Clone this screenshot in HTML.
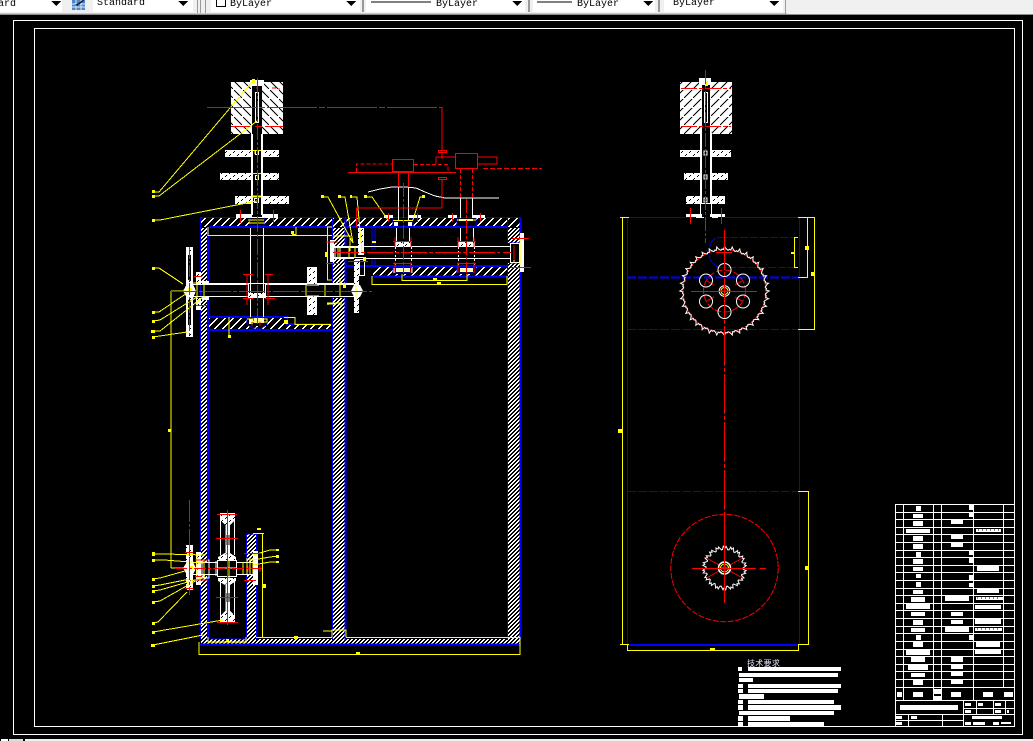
<!DOCTYPE html>
<html><head><meta charset="utf-8"><title>CAD</title>
<style>html,body{margin:0;padding:0;background:#000;width:1033px;height:741px;overflow:hidden}svg{display:block}
.t{font:10px "Liberation Mono","Noto Sans CJK SC",monospace;fill:#000}</style></head>
<body>
<svg width="1033" height="741" viewBox="0 0 1033 741" xmlns="http://www.w3.org/2000/svg" shape-rendering="crispEdges" fill="none">
<defs>
<pattern id="hb" width="9" height="9" patternUnits="userSpaceOnUse"><rect width="9" height="9" fill="#fff"/><path d="M0 0L8 8" stroke="#000"/></pattern>
<pattern id="hf" width="9" height="9" patternUnits="userSpaceOnUse"><rect width="9" height="9" fill="#fff"/><path d="M8 0L0 8" stroke="#000"/></pattern>
<pattern id="dk" width="8" height="6" patternUnits="userSpaceOnUse"><rect width="8" height="6" fill="#fff"/><path d="M2 1h1v1h-1zM1 2h1v1h-1zM6 4h1v1h-1zM5 5h1v1h-1z" fill="#000"/></pattern>
<pattern id="fine" width="4" height="4" patternUnits="userSpaceOnUse"><path d="M2 0h2v1h-2zM1 1h2v1h-2zM0 2h2v1h-2zM0 3h1v1h-1zM3 3h1v1h-1z" fill="#fff"/></pattern>
<pattern id="co" width="8" height="8" patternUnits="userSpaceOnUse"><path d="M6 0h2v1h-2zM5 1h2v1h-2zM4 2h2v1h-2zM3 3h2v1h-2zM2 4h2v1h-2zM1 5h2v1h-2zM0 6h2v1h-2zM0 7h1v1h-1zM7 7h1v1h-1z" fill="#fff"/></pattern>
<path id="ta" d="M-3.500 -40.500L-2.500 -42L-1 -41.500L0 -44.700L1 -43L3.500 -40.500" stroke="#fff"/>
<path id="tb" d="M-3.400 -18L-2 -18.500L-1.200 -21.800L0.500 -20L1.500 -21.800L3.400 -18" stroke="#fff"/>
</defs>

<!-- toolbar -->
<rect x="0" y="0" width="1033" height="15" fill="#f0f0f0"/>
<rect x="0" y="13" width="787" height="1" fill="#c8c8c8"/><rect x="787" y="14" width="246" height="1" fill="#a8a8a8"/>
<rect x="0" y="14" width="1033" height="1" fill="#8c8c8c"/>
<g fill="#fff"><rect x="0" y="0" width="62" height="12"/><rect x="93" y="0" width="100" height="12"/><rect x="211" y="0" width="149" height="12"/><rect x="366" y="0" width="159" height="12"/><rect x="533" y="0" width="122" height="12"/><rect x="664" y="0" width="119" height="12"/></g>
<g fill="#999"><rect x="197" y="0" width="1" height="13"/><rect x="200" y="0" width="1" height="13"/><rect x="205" y="0" width="1" height="13"/><rect x="362" y="0" width="2" height="12"/><rect x="528" y="0" width="2" height="12"/><rect x="658" y="0" width="2" height="12"/><rect x="785" y="0" width="1" height="14"/></g>
<rect x="72" y="0" width="13" height="10" fill="#4f86d0"/><path d="M72 4h13M72 7h13M76 0v10M81 0v10" stroke="#dce8f7"/><path d="M75 5L83 0L84 1L77 6z" fill="#223"/>
<g fill="#000"><path d="M51 1h10l-5 5zM178 1h10l-5 5zM346 1h10l-5 5zM512 1h10l-5 5zM643 1h10l-5 5zM769 1h10l-5 5z"/></g>
<text class="t" x="-2" y="6">ard</text><text class="t" x="97" y="5">Standard</text>
<rect x="216.500" y="-1" width="9" height="7.500" stroke="#000"/><text class="t" x="230" y="6">ByLayer</text>
<path d="M371 2h60M537 2h35" stroke="#000"/><text class="t" x="436" y="6">ByLayer</text><text class="t" x="577" y="6">ByLayer</text><text class="t" x="673" y="5">ByLayer</text>

<!-- frames -->
<rect x="13.500" y="20.500" width="1009" height="714" stroke="#fff"/>
<rect x="34.500" y="28.500" width="980" height="698" stroke="#fff"/>
<!-- bottom strip -->
<rect x="1" y="739" width="7" height="2" fill="#fff"/><rect x="9" y="739" width="14" height="2" fill="#ddd"/><rect x="25" y="739" width="1008" height="2" fill="#f0f0f0"/>

<!-- ===== LEFT VIEW ===== -->
<!-- walls hatch -->
<g>
<rect x="201" y="228" width="7" height="412" fill="url(#fine)"/>
<rect x="333" y="228" width="12" height="412" fill="url(#fine)"/>
<rect x="508" y="228" width="12" height="412" fill="url(#fine)"/>
<rect x="201" y="639" width="319" height="5" fill="url(#fine)"/>
<rect x="247" y="534" width="9" height="106" fill="url(#fine)"/>
<rect x="201" y="218" width="319" height="9" fill="url(#co)"/>
<rect x="373" y="267" width="134" height="9" fill="url(#co)"/>
<rect x="209" y="318" width="78" height="11" fill="url(#co)"/>
<rect x="287" y="325" width="45" height="4" fill="url(#co)"/>
</g>
<!-- cut-outs for bearings / shafts -->
<g fill="#000">
<rect x="200" y="284" width="9" height="14"/><rect x="200" y="562" width="9" height="13"/>
<rect x="332" y="246" width="14" height="13"/><rect x="332" y="284" width="14" height="14"/>
<rect x="246" y="562" width="11" height="13"/>
<rect x="393" y="218" width="20" height="9"/><rect x="457" y="218" width="19" height="9"/>
<rect x="393" y="267" width="19" height="7"/><rect x="457" y="267" width="19" height="7"/>
<rect x="247" y="318" width="20" height="8"/>
<rect x="250" y="218" width="14" height="9"/>
<rect x="507" y="243" width="14" height="20"/>
</g>
<!-- blue -->
<g stroke="#0000ff">
<path d="M200.500 217V640"/>
<path d="M208 227V284M208 298V562M208 575V640" stroke-width="2"/>
<path d="M332.500 217V246M332.500 259V284M332.500 298V640"/>
<path d="M345.500 217V246M345.500 259V284M345.500 298V640" stroke-width="2"/>
<path d="M507.500 217V243M507.500 263V640"/>
<path d="M520.500 218V640" stroke-width="2"/>
<path d="M200 217.500H521"/>
<path d="M200 644.500H521" stroke-width="2"/>
<path d="M209 227H332M346 227H507" stroke-width="2"/>
<path d="M372 227V250M375 227V250M372 258V266M375 258V266"/>
<path d="M346 266H507M372 276.500H507" stroke-width="2"/>
<path d="M209 317H287V324H332M209 330H332" stroke-width="2"/>
<path d="M246.500 534V562M246.500 575V640M256.500 534V562M256.500 575V640M246.500 534H256"/>
<path d="M393 218V227M413 218V227M393 227H413M457 218V227M476 218V227M457 227H476"/>
<path d="M393 266V272H412V266M457 266V272H476V266"/>
<path d="M247 318V324L252 328H262L267 324V318"/>
<path d="M250 218V226H264V218"/>
<path d="M208 639H246"/>
<path d="M509 243H520M509 263H520"/>
<path d="M332 247H345M332 258H345M332 284H345M332 297H345"/>
</g>

<!-- top block & disks -->
<rect x="231" y="82" width="52" height="52" fill="url(#hb)"/>
<rect x="252" y="84" width="10" height="51" fill="#000"/>
<rect x="250" y="80" width="14" height="6" fill="#fff"/>
<rect x="255.500" y="92.500" width="3" height="30" stroke="#fff"/>
<g fill="url(#dk)">
<rect x="225" y="150" width="54" height="7"/><rect x="220" y="173" width="59" height="7"/><rect x="235" y="196" width="54" height="8"/><rect x="236" y="214" width="42" height="4" fill="#fff"/>
</g>
<rect x="252" y="135" width="10" height="82" fill="#000"/>
<g stroke="#fff">
<path d="M251.500 134V215M252.500 134V215M261.500 134V215M262.500 134V215"/>
<path d="M250.500 228V317M263.500 228V317"/>
<rect x="255.500" y="150.500" width="3" height="4"/><rect x="255.500" y="175.500" width="3" height="4"/><rect x="254.500" y="198.500" width="4" height="4"/>
</g>
<!-- horizontal shaft -->
<g stroke="#fff">
<path d="M209 284.500H248M209 296.500H248M266 284.500H354M266 296.500H354"/>
<path d="M209 283.500H248M266 283.500H354"/>
<rect x="248.500" y="283.500" width="17" height="14"/>
</g>
<rect x="249" y="293" width="16" height="4" fill="url(#dk)"/>
<rect x="307" y="267" width="10" height="48" fill="url(#dk)"/>
<rect x="307" y="284" width="10" height="12" fill="#000"/>
<path d="M307 285H319M307 296H319" stroke="#fff"/>
<rect x="254" y="318" width="10" height="5" fill="#fff"/><rect x="249" y="319" width="4" height="5" fill="#fff"/>
<!-- left chain wheel upper -->
<rect x="186" y="247" width="7" height="90" fill="url(#dk)"/>
<rect x="188" y="255" width="3" height="25" fill="#000"/><rect x="188" y="300" width="3" height="25" fill="#000"/>
<path d="M186.500 247V337M192.500 247V337" stroke="#fff"/>
<rect x="196" y="272" width="5" height="12" fill="url(#dk)"/><rect x="196" y="298" width="5" height="12" fill="url(#dk)"/>
<path d="M183 291L187 284H193L196 291L193 298H187z" fill="#fff"/>
<path d="M193 284.500H209M193 296.500H209" stroke="#fff"/>
<rect x="202" y="281" width="7" height="4" fill="#fff"/><rect x="202" y="297" width="7" height="3" fill="#fff"/>
<!-- left chain wheel lower -->
<rect x="186" y="545" width="7" height="45" fill="url(#dk)"/>
<rect x="196" y="552" width="5" height="33" fill="url(#dk)"/>
<path d="M183 568L187 562H193L196 568L193 575H187z" fill="#fff"/>
<path d="M193 562.500H218M193 574.500H218M236 562.500H253M236 574.500H253" stroke="#fff"/>
<rect x="202" y="560" width="7" height="18" stroke="#fff"/>
<!-- pulley -->
<path d="M220 513H235V520L230 525H225L220 520z" fill="url(#dk)"/><path d="M220 623H235V616L230 611H225L220 616z" fill="url(#dk)"/>
<path d="M218 560V557L225 553H230L236 557V560z" fill="url(#dk)"/><path d="M218 578V581L225 585H230L236 581V578z" fill="url(#dk)"/>
<path d="M220.500 518V555M234.500 518V555M220.500 582V618M234.500 582V618M226 525V555M229 525V555M226 582V612M229 582V612" stroke="#fff"/>
<rect x="226" y="525" width="4" height="10" fill="#fff"/><rect x="226" y="545" width="4" height="8" fill="#fff"/><rect x="226" y="585" width="4" height="8" fill="#fff"/><rect x="226" y="602" width="4" height="10" fill="#fff"/>
<rect x="217.500" y="560.500" width="19" height="16" stroke="#fff"/>
<path d="M218 568H236M216 561V576" stroke="#fff"/>
<rect x="253" y="551" width="5" height="34" fill="#fff"/>

<!-- right compartment shaft/bearing whites -->
<g stroke="#fff">
<path d="M363 246.500H510M363 258.500H510"/>
<path d="M398.500 187V220M408.500 187V220M460.500 198V218M472.500 198V218"/>
<path d="M396.500 228V242M409.500 228V242M460.500 228V242M473.500 228V242"/>
<path d="M368 192L380 189L392 187L405 187L416 188L425 192L435 196L445 198L499 198"/>
<path d="M395.500 247V267M411.500 247V267M458.500 247V267M474.500 247V267" stroke-dasharray="2 2"/>
<path d="M394 268V273M412 268V273"/>
</g>
<g fill="url(#dk)"><rect x="395" y="242" width="16" height="5"/><rect x="458" y="242" width="17" height="5"/></g>
<g fill="#fff">
<rect x="384" y="215" width="9" height="3"/><rect x="409" y="215" width="12" height="3"/><rect x="448" y="215" width="9" height="3"/><rect x="472" y="215" width="13" height="3"/>
<rect x="396" y="268" width="14" height="4"/><rect x="460" y="268" width="13" height="4"/>
<rect x="520" y="233" width="4" height="39"/>
<rect x="394" y="222" width="4" height="4"/><rect x="408" y="222" width="4" height="4"/><rect x="459" y="219" width="14" height="2"/>
</g>
<rect x="510.500" y="243.500" width="9" height="19" stroke="#fff"/>
<!-- mid wall bearing -->
<rect x="358" y="228" width="6" height="19" fill="url(#dk)"/><rect x="358" y="247" width="6" height="8" fill="#fff"/>
<rect x="354" y="259" width="5" height="54" fill="url(#dk)"/>
<rect x="359.500" y="259.500" width="5" height="16" stroke="#fff"/>
<path d="M333 247.500H363M333 257.500H363M333 246.500H363M333 258.500H354" stroke="#fff"/>
<path d="M351 291L354 285H360L363 291L360 297H354z" fill="#fff"/>
<rect x="330" y="240" width="4" height="22" fill="#fff"/>
<rect x="335" y="247" width="5" height="11" stroke="#fff"/>

<!-- yellow -->
<g stroke="#ffff00">
<path d="M153 192H159L252 82M153 196H159L257 121M153 220H160L257 201"/>
<path d="M153 268H159L183 284M153 312H159L187 293M153 321L160 320L197 297M153 331H160L203 297M153 337L187 332"/>
<path d="M322 197H328L353 243M339 197H345L353 243M351 197H357L362 252M365 197H372L388 220M424 197H420L413 220"/>
<path d="M153 554H164L205 555M153 560H164L203 563M153 579L160 578L185 571M153 586L160 585L190 579M153 591L160 590L205 577M153 602L160 601L197 580M153 623L158 622L187 592M153 632L223 620M153 645L203 635"/>
<path d="M278 550H270L253 555M278 556L270 557L253 560M278 562H270L253 565"/>
<path d="M208 227V235.500H332M296 227V235"/>
<path d="M229 317V335"/>
<path d="M171 291H186M171 291V568M171 568H186"/>
<path d="M199 642V654.500H520V642"/>
<path d="M208 637V642H246V637M256 637.500H332M346 637.500H520V642"/>
<path d="M253 533.500H264M262.500 533V637M332 637V630H346V637M323 631H332"/>
<path d="M372 276V284.500H507V276M402 274V280.500H467V274"/>
<path d="M284 317.500H295V324.500H331"/>
<path d="M327.500 227V280M327 227H332M327 280H332M333 236H350V251M310 235.500H332"/>
<path d="M248 220H264M248 223H264M393 220.500H413M457 220H476"/>
<path d="M252 150.500H261M252 173.500H261M252 197H261M252 196H261"/>
<path d="M247 319H267V322H249M251 321H262"/>
<path d="M397 270H410M460 270H473"/>
<path d="M197 284V298M204 284V298M193 283H199"/>
<path d="M197 555V578M204 560V578M197 555H205"/>
<path d="M340 278V297M356 285V297M306 285V296M325 285V296"/>
<path d="M338 247V258M349 247V258M355 246V258"/>
<path d="M243 562V574M247 558V574M250 558V574M253 558V574"/>
<path d="M514 245V262M520 240V265"/>
<path d="M229 560V578"/>
<path d="M327 304H335M328 305V303M327 303H341V307"/>
<path d="M255 150V154M258 173V179"/>
</g>
<g fill="#ffff00">
<rect x="152" y="190" width="3" height="3"/><rect x="152" y="195" width="3" height="3"/><rect x="152" y="219" width="3" height="3"/><rect x="152" y="267" width="3" height="3"/>
<rect x="152" y="311" width="3" height="3"/><rect x="152" y="320" width="3" height="3"/><rect x="151" y="330" width="4" height="3"/><rect x="152" y="336" width="3" height="3"/>
<rect x="152" y="552" width="3" height="4"/><rect x="152" y="559" width="3" height="3"/><rect x="152" y="578" width="3" height="3"/><rect x="152" y="585" width="3" height="3"/><rect x="152" y="590" width="3" height="3"/><rect x="152" y="601" width="3" height="3"/><rect x="152" y="622" width="3" height="3"/><rect x="152" y="631" width="3" height="3"/><rect x="151" y="644" width="4" height="3"/>
<rect x="321" y="195" width="3" height="3"/><rect x="338" y="195" width="3" height="3"/><rect x="350" y="195" width="2" height="3"/><rect x="364" y="195" width="3" height="3"/><rect x="422" y="195" width="3" height="3"/>
<rect x="276" y="549" width="3" height="2"/><rect x="276" y="555" width="3" height="3"/><rect x="276" y="561" width="3" height="2"/>
<rect x="168" y="429" width="3" height="3"/><rect x="292" y="234" width="4" height="2"/><rect x="291" y="231" width="3" height="3"/>
<rect x="228" y="335" width="3" height="3"/><rect x="284" y="320" width="4" height="4"/><rect x="325" y="252" width="3" height="5"/>
<rect x="263" y="584" width="3" height="4"/><rect x="356" y="652" width="4" height="2"/><rect x="294" y="636" width="4" height="3"/><rect x="226" y="639" width="3" height="3"/>
<rect x="372" y="241" width="4" height="2"/><rect x="433" y="278" width="4" height="3"/><rect x="437" y="282" width="4" height="2"/>
<rect x="343" y="283" width="3" height="5"/><rect x="363" y="257" width="3" height="5"/><rect x="257" y="528" width="4" height="2"/>
<rect x="252" y="79" width="3" height="5"/><rect x="188" y="288" width="4" height="3"/><rect x="189" y="566" width="4" height="3"/>
</g>

<!-- red -->
<g stroke="#ff0000">
<path d="M207 107.500H442" stroke-dasharray="50 2 6 2"/>
<path d="M442 107V150M442 153V159M442 179V208M356 208H442M356.500 208V227"/>
<rect x="438.500" y="150.500" width="8" height="2"/><rect x="438.500" y="177.500" width="8" height="2"/>
<rect x="392.500" y="159.500" width="21" height="12"/><rect x="455.500" y="153.500" width="22" height="15"/>
<path d="M436 164V157H455M478 157H497V164H478M348 172.500H456" />
<path d="M356.500 172V164H392M414 164.500H448V172" stroke-dasharray="4 2"/>
<path d="M483 168.500H542" stroke-dasharray="5 2"/>
<path d="M398.500 172V187M408.500 172V187" />
<path d="M460.500 169V198M472.500 169V198" stroke-dasharray="4 2"/>
<path d="M257.500 78V325" stroke-dasharray="16 2 3 2"/>
<path d="M231 126.500H250M255 126.500H262M265 126.500H283"/>
<path d="M256 88H258M272 88H276M278 89H280"/>
<path d="M171 291.500H372" stroke-dasharray="26 2 4 2"/>
<path d="M189.500 247V337" stroke-dasharray="12 2 2 2"/>
<path d="M189.500 500V595" stroke-dasharray="22 2 3 2"/>
<path d="M175 568.500H262" stroke-dasharray="12 2 3 2"/>
<path d="M227.500 510V625"/>
<path d="M217 514.500H237M216 538.500H238M216 597.500H238M217 622.500H238"/>
<path d="M247 275V305M268 275V305M243 274.500H253M265 274.500H273M243 298.500H253M265 298.500H275"/>
<path d="M194 276.500H202M196 305.500H207"/>
<path d="M185 552.500H193M185 588.500H193M195 576.500H202"/>
<path d="M403.500 183V273" stroke-dasharray="14 2 3 2"/>
<path d="M466.500 199V273" stroke-dasharray="14 2 3 2"/>
<path d="M388.500 213V222M417.500 213V222M452.500 213V222M480.500 213V222"/>
<path d="M240.500 210V223M273.500 210V223"/>
<path d="M393 241.500H412M393 263.500H412M457 241.500H476M457 263.500H476"/>
<path d="M395 237V247M411 237V247M458 237V247M474 237V247"/>
<path d="M395 262V273M411 262V273M458 262V273M474 262V273"/>
<path d="M333 252.500H500M503 252.500H511" stroke-dasharray="26 2 4 2"/>
<path d="M512 238.500H529M511 267.500H531M514 245V260"/>
<path d="M326 242H338M326 263.500H340M348 261.500H368"/>
<path d="M244 553.500H262M244 580.500H256M195 560H208M195 580H208"/>
<path d="M248 566V572M260 566V572"/>
<path d="M252 322V326M260 322V326"/>
</g>

<!-- ===== RIGHT VIEW ===== -->
<rect x="680" y="82" width="52" height="52" fill="url(#hf)"/>
<rect x="702" y="82" width="8" height="53" fill="#000"/>
<rect x="699" y="78" width="12" height="7" fill="#fff"/>
<rect x="704.500" y="92.500" width="3" height="30" stroke="#fff"/>
<g fill="url(#dk)"><rect x="680" y="150" width="51" height="7"/><rect x="684" y="173" width="44" height="7"/><rect x="686" y="196" width="39" height="8"/></g>
<rect x="686" y="214" width="39" height="4" fill="#fff"/>
<rect x="702" y="135" width="8" height="82" fill="#000"/>
<g fill="#fff"><rect x="700" y="133" width="2" height="71"/><rect x="710" y="133" width="2" height="71"/></g>
<path d="M700.500 203V214M711.500 203V214M700 203.500H712" stroke="#fff"/>
<rect x="704" y="151" width="3" height="4" stroke="#fff"/><rect x="704" y="175" width="3" height="4" stroke="#fff"/><rect x="704" y="198" width="3" height="4" stroke="#fff"/>
<rect x="705" y="81" width="3" height="5" fill="#ffff00"/>
<g stroke="#0000ff">
<path d="M627.500 217V644M799.500 217V644M620 217.500H800"/>
<path d="M627 277.500H799" stroke-dasharray="9 2" stroke-width="2"/>
<path d="M627 329.500H799M627 491.500H799" stroke-dasharray="9 2"/>
<path d="M720 237.500H798M718 267.500H798" stroke-dasharray="8 2"/>
<path d="M720 237.500Q709 238 709 253Q709 262 718 267" stroke-dasharray="3 1" shape-rendering="auto"/>
</g>
<rect x="627" y="644" width="172" height="2" fill="#0000ff"/>
<rect x="695" y="217" width="30" height="1" fill="#000"/><rect x="696" y="217" width="8" height="1" fill="#fff"/><rect x="712" y="217" width="6" height="1" fill="#fff"/>
<g stroke="#ffff00">
<path d="M622.500 217V644M620 217.500H629M620 644.500H629"/>
<path d="M798 217.500H814.500V329.500H798"/>
<path d="M798 217.500H807.500V277.500H798"/>
<path d="M794 237.500H798M794.500 237.500V267.500M794 267.500H798"/>
<path d="M798 491.500H808.500V644.500H798"/>
<path d="M627.500 644V651M798.500 644V651M627 650.500H799"/>
</g>
<g fill="#ffff00"><rect x="805" y="246" width="4" height="4"/><rect x="811" y="272" width="4" height="4"/><rect x="791" y="252" width="3" height="2"/><rect x="805" y="566" width="4" height="4"/><rect x="710" y="648" width="5" height="2"/><rect x="618" y="429" width="4" height="4"/></g>
<!-- big gear -->
<g transform="translate(724.500 291)" shape-rendering="auto">
<circle r="41.500" stroke="#ff0000" stroke-dasharray="8 1"/>
<g id="gA">
<use href="#ta"/><use href="#ta" transform="rotate(10)"/><use href="#ta" transform="rotate(20)"/><use href="#ta" transform="rotate(30)"/><use href="#ta" transform="rotate(40)"/><use href="#ta" transform="rotate(50)"/>
<use href="#ta" transform="rotate(60)"/><use href="#ta" transform="rotate(70)"/><use href="#ta" transform="rotate(80)"/><use href="#ta" transform="rotate(90)"/><use href="#ta" transform="rotate(100)"/><use href="#ta" transform="rotate(110)"/>
<use href="#ta" transform="rotate(120)"/><use href="#ta" transform="rotate(130)"/><use href="#ta" transform="rotate(140)"/><use href="#ta" transform="rotate(150)"/><use href="#ta" transform="rotate(160)"/><use href="#ta" transform="rotate(170)"/>
<use href="#ta" transform="rotate(180)"/><use href="#ta" transform="rotate(190)"/><use href="#ta" transform="rotate(200)"/><use href="#ta" transform="rotate(210)"/><use href="#ta" transform="rotate(220)"/><use href="#ta" transform="rotate(230)"/>
<use href="#ta" transform="rotate(240)"/><use href="#ta" transform="rotate(250)"/><use href="#ta" transform="rotate(260)"/><use href="#ta" transform="rotate(270)"/><use href="#ta" transform="rotate(280)"/><use href="#ta" transform="rotate(290)"/>
<use href="#ta" transform="rotate(300)"/><use href="#ta" transform="rotate(310)"/><use href="#ta" transform="rotate(320)"/><use href="#ta" transform="rotate(330)"/><use href="#ta" transform="rotate(340)"/><use href="#ta" transform="rotate(350)"/>
</g>
<circle r="21" stroke="#ff0000" stroke-dasharray="7 2"/>
<g stroke="#ff0000"><path d="M0 0L-18.200 -10.500M0 0L18.200 -10.500M0 0L-18.200 10.500M0 0L18.200 10.500" stroke-dasharray="0 12 8 0"/></g>
<g stroke="#fff"><circle cy="-21" r="6.500"/><circle cy="21" r="6.500"/><circle cx="18.500" cy="-10.500" r="6.500"/><circle cx="18.500" cy="10.500" r="6.500"/><circle cx="-18.500" cy="-10.500" r="6.500"/><circle cx="-18.500" cy="10.500" r="6.500"/><circle r="5.300"/></g>
<circle r="3.500" stroke="#ffff00"/>
</g>
<g stroke="#ff0000">
<path d="M691 291.500H757M716 252.500H732"/>
<path d="M724.500 230V603" stroke-dasharray="40 2 4 2"/>
<path d="M705.500 70V243" stroke-dasharray="14 2 3 2"/>
<path d="M681 88.500H731M681 126.500H731" stroke-dasharray="16 2 4 2"/>
<path d="M690.500 208V224M721.500 208V224"/>
<path d="M720 291H729M724.500 287V296"/>
</g>
<!-- small gear -->
<g transform="translate(724.500 568)" shape-rendering="auto">
<circle r="53.700" stroke="#ff0000" stroke-dasharray="6 1.500"/>
<use href="#tb"/><use href="#tb" transform="rotate(20)"/><use href="#tb" transform="rotate(40)"/><use href="#tb" transform="rotate(60)"/><use href="#tb" transform="rotate(80)"/><use href="#tb" transform="rotate(100)"/><use href="#tb" transform="rotate(120)"/><use href="#tb" transform="rotate(140)"/><use href="#tb" transform="rotate(160)"/><use href="#tb" transform="rotate(180)"/><use href="#tb" transform="rotate(200)"/><use href="#tb" transform="rotate(220)"/><use href="#tb" transform="rotate(240)"/><use href="#tb" transform="rotate(260)"/><use href="#tb" transform="rotate(280)"/><use href="#tb" transform="rotate(300)"/><use href="#tb" transform="rotate(320)"/><use href="#tb" transform="rotate(340)"/>
<g stroke="#ff0000"><path d="M-18 -10L18 10M-18 10L18 -10" /></g>
<circle r="6" fill="#000" stroke="#fff" stroke-width="1.500"/>
<circle r="4" stroke="#ffff00"/>
<path d="M-3 0H3M0 -3V3" stroke="#ff0000" stroke-width="2"/>
</g>
<path d="M692 568.500H756M760 568.500H766M724.500 514V603" stroke="#ff0000"/>

<!-- tech notes -->
<text x="747" y="666" font-family="'Liberation Sans','Noto Sans CJK SC',sans-serif" font-size="8" letter-spacing="0.300" fill="#e8e8ff">技术要求</text>
<path fill="#fff" d="M738 667h4v4h-4zM748 667h93v4h-93zM739 673h99v4h-99zM739 678h14v4h-14zM738 684h5v4h-5zM748 684h93v4h-93zM738 689h5v4h-5zM748 689h90v4h-90zM739 694h25v5h-25zM738 700h5v4h-5zM748 700h86v4h-86zM738 705h5v5h-5zM748 705h93v5h-93zM739 711h95v4h-95zM738 716h5v5h-5zM748 716h42v5h-42zM738 722h5v4h-5zM748 722h76v4h-76z"/>

<!-- title block -->
<g stroke="#fff">
<rect x="895.500" y="504.500" width="119" height="222"/>
<path d="M895 512.500H1014M895 519.500H1014M895 527.500H1014M895 534.500H1014M895 542.500H1014M895 550.500H1014M895 557.500H1014M895 565.500H1014M895 572.500H1014M895 580.500H1014M895 588.500H1014M895 595.500H1014M895 603.500H1014M895 610.500H1014M895 618.500H1014M895 626.500H1014M895 633.500H1014M895 641.500H1014M895 649.500H1014M895 656.500H1014M895 664.500H1014M895 671.500H1014M895 679.500H1014M895 687.500H1014M895 700.500H1014"/>
<path d="M903.500 504V687M933.500 504V700M941.500 504V700M973.500 504V700M1003.500 504V687M903.500 687V700"/>
<path d="M963.500 700V726M976.500 700V714M993.500 700V714M1005.500 700V714M963 708.500H1014"/>
<path d="M895 714.500H1014M908.500 714V726M942.500 714V726M895 720.500H963"/>
</g>
<path fill="#fff" d="M916 506h5v5h-5zM913 514h10v4h-10zM913 521h10v5h-10zM906 529h24v4h-24zM913 536h10v5h-10zM913 544h10v5h-10zM916 552h5v5h-5zM913 559h10v5h-10zM913 567h10v4h-10zM916 574h5v4h-5zM916 582h5v5h-5zM913 590h10v4h-10zM911 597h14v5h-14zM906 604h24v5h-24zM911 612h14v4h-14zM913 620h10v5h-10zM911 628h14v4h-14zM916 635h5v5h-5zM913 642h10v5h-10zM906 650h24v5h-24zM911 657h14v5h-14zM908 665h20v5h-20zM911 673h14v4h-14zM913 680h10v5h-10z
M969 505h4v5h-4zM969 512h4v5h-4zM951 519h12v5h-12zM951 535h12v4h-12zM951 543h12v4h-12zM969 550h4v5h-4zM969 558h4v5h-4zM969 575h4v5h-4zM969 583h4v4h-4zM945 596h24v5h-24zM951 612h12v4h-12zM951 620h12v4h-12zM945 627h24v5h-24zM969 635h4v5h-4zM951 657h12v5h-12zM951 665h12v4h-12zM951 672h12v4h-12zM951 679h12v5h-12z
M977 566h22v5h-22zM977 589h22v4h-22zM975 605h26v4h-26zM975 619h26v5h-26zM976 642h24v5h-24zM975 650h26v4h-26z
M897 692h5v5h-5zM913 692h10v5h-10zM934 689h7v5h-7zM934 696h7v4h-7zM951 692h10v5h-10zM983 692h10v5h-10zM1004 692h9v5h-9z
M900 705h58v5h-58zM965 703h6v3h-6zM978 703h5v3h-5zM995 703h6v3h-6zM965 710h6v3h-6zM995 710h6v3h-6zM1007 710h2v3h-2z
M896 716h6v3h-6zM911 716h6v3h-6zM896 722h6v3h-6zM972 716h30v3h-30zM965 722h6v3h-6zM973 722h12v3h-12zM993 722h6v3h-6zM1001 722h10v2h-10z"/>
<path fill="#fff" d="M976 529h25v3h-25zM976 597h27v3h-27zM975 628h27v3h-27z"/>
<path d="M978 530h22M977 598h24M977 629h24" stroke="#000" stroke-dasharray="1 3"/>
</svg>
</body></html>
